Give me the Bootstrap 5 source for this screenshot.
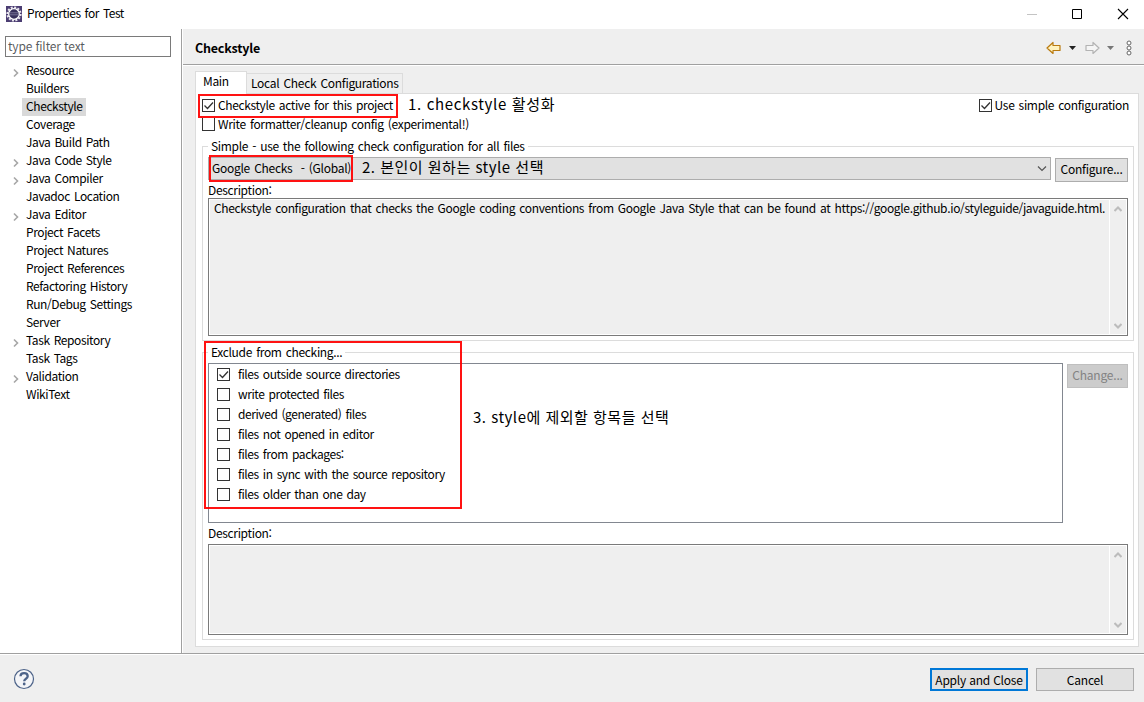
<!DOCTYPE html>
<html lang="ko">
<head>
<meta charset="utf-8">
<title>Properties for Test</title>
<link href="https://cdn.jsdelivr.net/npm/bootstrap@5.3.0/dist/css/bootstrap.min.css" rel="stylesheet">
<style>
:root{--face:#efefef;--line:#a0a0a0;--soft:#dcdcdc}
body{font:12px/18px "Noto Sans CJK KR","Open Sans",sans-serif;color:#000;background:#fff;width:1144px;height:702px;overflow:hidden;letter-spacing:-.33px;word-spacing:1.1px}
svg{display:block;flex:none}
.titlebar{height:29px;padding:0 15px 2px 6px}
.title-text{padding:0 0 1px 5px;letter-spacing:-.46px}
.side{width:182px;border-right:1px solid var(--line);background:#fff;padding:7px 10px 0 5px}
.filter{height:21px;border:1px solid #7a7a7a;border-radius:0;padding:0 2px 2px;font:inherit;letter-spacing:-.15px;color:#6d6d6d;width:166px;min-height:0;line-height:17px}
.tree{margin-top:5px}
.tree li{height:18px;display:flex;align-items:center;padding-left:5px}
.tree svg{margin:3px 1px 0 2px}
.tree span{padding:0 3px 2px 4px;line-height:16px;letter-spacing:-.4px}
.tree li.leaf{padding-left:17px}
.tree .picked{background:#d9d9d9}
.pane{background:var(--face);border-left:1px solid #fff;min-width:0}
.head{height:36px;border-bottom:1px solid var(--line);padding:2px 11px 0 12px}
.head b{font-size:12.5px;letter-spacing:-.2px}
.body-area{border-top:1px solid #fff;padding:5px 5px 6px 12px}
.tabs{height:22px}
.tab-on{width:52px;height:23px;background:#fff;border:1px solid var(--soft);border-bottom:0;padding:0 0 0 7px;z-index:1}
.tab-off{width:156px;height:20px;border:1px solid var(--soft);border-left:0;border-bottom:0;padding-left:4px;line-height:18px;white-space:nowrap;letter-spacing:-.3px}
.sheet{border:1px solid var(--soft);background:#fff;height:554px;padding:2px 4px 0 6px}
.opt{height:19px;white-space:nowrap}
.opt span{padding-bottom:2px;line-height:16px}
.opt.tight{letter-spacing:-.38px}
.box{width:13px;height:13px;border:1px solid #333;background:#fff;flex:none;margin-right:3px}
.group{border:1px solid var(--soft);padding:10px 5px 0 5px}
.legend-txt{position:absolute;top:-10px;left:5px;background:#fff;padding:0 3px;line-height:18px;white-space:nowrap}
.combo{height:23px;border:1px solid #adadad;background:#e1e1e1;padding:0 3px 0 3px;width:843px}
.combo span{white-space:pre;padding-bottom:2px;line-height:16px;letter-spacing:-.28px}
.pbtn{height:24px;border:1px solid #adadad;border-radius:0;background:#e1e1e1;padding:0;font:inherit;letter-spacing:-.22px;line-height:20px;padding-bottom:2px;color:#000;white-space:nowrap}
.pbtn.off{background:#ccc;border-color:#bfbfbf;color:#838383}
.memo{border:1px solid #7a7a7a;padding:1px;background:#fff}
.memo>div{background:var(--face)}
.memo>div:first-child{min-width:0}
.memo p{margin:-1px 0 0;padding:0 0 0 4px;white-space:nowrap;letter-spacing:-.342px}
.scroll{width:17px;border-left:1px solid #fff;padding:6px 1px 5px 0}
.list{width:855px;height:160px;border:1px solid #828790;padding:1px 0 0 8px}
.list .opt{height:20px;gap:8px;letter-spacing:-.42px}
.list .box{margin:0 0 1px}
.foot{height:49px;border-top:1px solid var(--line);background:var(--face);box-shadow:inset 0 1px #fff;padding:2px 10px 0 13px}
.foot .pbtn{width:98px;height:23px;line-height:21px;padding-bottom:0}
.foot .main-btn{border:2px solid #0078d7;line-height:19px}
.frame{position:absolute;border:2px solid #f00;opacity:.93}
.note{position:absolute;font-size:15px;line-height:22px;white-space:nowrap;letter-spacing:.5px;word-spacing:0}
</style>
</head>
<body class="d-flex flex-column position-relative">
<header class="titlebar d-flex align-items-center">
<svg width="16" height="16" viewBox="0 0 16 16"><rect width="16" height="16" fill="#4b3d72"/><circle cx="8" cy="8" r="6.6" fill="none" stroke="#e9e7ee" stroke-width="2" stroke-dasharray="2 1.45"/><circle cx="8" cy="8" r="5.3" fill="#37305a" stroke="#fff" stroke-width="1.3"/><path d="M3.5 6.8h9M3.5 8.8h9" stroke="#777394"/></svg>
<span class="flex-grow-1 title-text">Properties for Test</span>
<svg width="102" height="12" viewBox="0 0 102 12"><path d="M0 6.5h10" stroke="#c4c4c4"/><path d="M45.500 1.500h9v9h-9z" fill="none" stroke="#000"/><path d="M91 1l10 10M101 1l-10 10" stroke="#000" stroke-width="1.1"/></svg>
</header>
<main class="d-flex flex-grow-1">
<nav class="side flex-shrink-0">
<input class="filter form-control" placeholder="type filter text" aria-label="filter">
<ul class="tree list-unstyled mb-0" id="tree"></ul>
</nav>
<section class="pane flex-grow-1">
<div class="head d-flex align-items-center"><b class="flex-grow-1">Checkstyle</b>
<svg width="87" height="16" viewBox="0 0 87 16"><path d="M1 8l6-5.500v3h7v5H7v3z" fill="#fff3bf" stroke="#b97a10" stroke-width="1.200" stroke-linejoin="round"/><path d="M23 6h7l-3.500 4z" fill="#222"/><path d="M53 8l-6-5.500v3h-7v5h7v3z" fill="#f5f5f5" stroke="#b3b3b3" stroke-width="1.200" stroke-linejoin="round"/><path d="M61 6h7l-3.500 4z" fill="#777"/><g fill="#fff" stroke="#666"><circle cx="83" cy="3" r="2"/><circle cx="83" cy="8" r="2"/><circle cx="83" cy="13" r="2"/></g></svg>
</div>
<div class="body-area">
<div class="tabs d-flex align-items-end"><div class="tab-on align-self-start">Main</div><div class="tab-off">Local Check Configurations</div></div>
<div class="sheet">
<div class="d-flex justify-content-between">
<div class="opt tight d-flex align-items-center"><i class="box"><svg width="11" height="11"><path d="M1.500 5.500l3 3 5.500-6" fill="none" stroke="#333" stroke-width="1.300"/></svg></i><span>Checkstyle active for this project</span></div>
<div class="opt d-flex align-items-center me-1 pe-1"><i class="box"><svg width="11" height="11"><path d="M1.500 5.500l3 3 5.500-6" fill="none" stroke="#333" stroke-width="1.300"/></svg></i><span style="margin-right:-3px">Use simple configuration</span></div>
</div>
<div class="opt d-flex align-items-center"><i class="box border-top-0"></i><span>Write formatter/cleanup config (experimental!)</span></div>
<div class="group position-relative" style="height:195px;margin-top:12px"><span class="legend-txt">Simple - use the following check configuration for all files</span>
<div class="d-flex"><div class="combo d-flex align-items-center"><span class="flex-grow-1">Google Checks  - (Global)</span><svg width="10" height="6"><path d="M1 .5l4 4 4-4" fill="none" stroke="#555" stroke-width="1.200"/></svg></div><button class="pbtn btn" style="width:73px;margin:1px 0 0 4px">Configure...</button></div>
<div style="height:16px;line-height:16px">Description:</div>
<div class="memo d-flex" style="height:138px"><div class="flex-grow-1"><p>Checkstyle configuration that checks the Google coding conventions from Google Java Style that can be found at https://google.github.io/styleguide/javaguide.html.</p></div><div class="scroll d-flex flex-column justify-content-between align-items-center flex-shrink-0"><svg width="8" height="6"><path d="M.5 5l3.500-3.500L7.500 5" fill="none" stroke="#bcbcbc" stroke-width="2"/></svg><svg width="8" height="6"><path d="M.5 1L4 4.500 7.500 1" fill="none" stroke="#bcbcbc" stroke-width="2"/></svg></div></div>
</div>
<div class="group position-relative" style="height:288px;margin-top:11px"><span class="legend-txt">Exclude from checking...</span>
<div class="d-flex"><div class="list" id="list"></div><button class="pbtn off btn" style="width:61px;margin:1px 0 0 4px">Change...</button></div>
<div style="height:21px;line-height:20px">Description:</div>
<div class="memo d-flex" style="height:91px"><div class="flex-grow-1"></div><div class="scroll d-flex flex-column justify-content-between align-items-center flex-shrink-0"><svg width="8" height="6"><path d="M.5 5l3.500-3.500L7.500 5" fill="none" stroke="#bcbcbc" stroke-width="2"/></svg><svg width="8" height="6"><path d="M.5 1L4 4.500 7.500 1" fill="none" stroke="#bcbcbc" stroke-width="2"/></svg></div></div>
</div>
</div>
</div>
</section>
</main>
<footer class="foot d-flex align-items-center">
<svg width="22" height="22" viewBox="0 0 22 22"><circle cx="11" cy="11" r="9.500" fill="#f4f5f8" stroke="#4d6389" stroke-width="1.200"/><path d="M7.500 8.200c0-4.200 7.200-4.200 7.200 0 0 2.500-3.500 2.500-3.500 5" fill="none" stroke="#4d6389" stroke-width="2.300"/><circle cx="11.200" cy="16" r="1.400" fill="#4d6389"/></svg>
<button class="pbtn main-btn btn ms-auto">Apply and Close</button><button class="pbtn btn ms-2">Cancel</button>
</footer>
<div class="frame" style="left:198px;top:94px;width:200px;height:24px"></div>
<div class="frame" style="left:209px;top:155px;width:144px;height:27px"></div>
<div class="frame" style="left:204px;top:341px;width:258px;height:168px"></div>
<div class="note" style="left:408px;top:93px;letter-spacing:.65px">1. checkstyle 활성화</div>
<div class="note" style="left:362px;top:156px">2. 본인이 원하는 style 선택</div>
<div class="note" style="left:473px;top:406px">3. style에 제외할 항목들 선택</div>
<script>
const pages=['>Resource','Builders','Checkstyle','Coverage','Java Build Path','>Java Code Style','>Java Compiler','Javadoc Location','>Java Editor','Project Facets','Project Natures','Project References','Refactoring History','Run/Debug Settings','Server','>Task Repository','Task Tags','>Validation','WikiText'];
tree.innerHTML=pages.map(p=>p[0]=='>'?`<li><svg width="9" height="10"><path d="M2 1.500L5.500 5 2 8.500" fill="none" stroke="#a6a6a6" stroke-width="1.600"/></svg><span>${p.slice(1)}</span></li>`:`<li class="leaf"><span class="${p=='Checkstyle'?'picked':''}">${p}</span></li>`).join('');
const filters=['files outside source directories','write protected files','derived (generated) files','files not opened in editor','files from packages:','files in sync with the source repository','files older than one day'];
list.innerHTML=filters.map((t,i)=>`<div class="opt d-flex align-items-center"><i class="box">${i?'':'<svg width="11" height="11"><path d="M1.500 5.500l3 3 5.500-6" fill="none" stroke="#333" stroke-width="1.300"/></svg>'}</i><span>${t}</span></div>`).join('');
</script>
<script src="https://cdn.jsdelivr.net/npm/bootstrap@5.3.0/dist/js/bootstrap.bundle.min.js"></script>
</body>
</html>
